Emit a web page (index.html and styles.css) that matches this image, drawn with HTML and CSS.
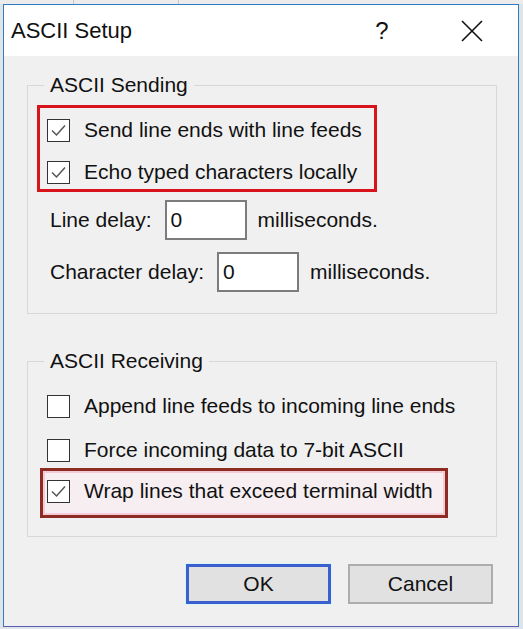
FILE: index.html
```html
<!DOCTYPE html>
<html lang="en">

<head>
    <meta charset="UTF-8">
    <meta name="viewport" content="width=device-width, initial-scale=1.0">
    <title>ASCII Setup</title>
    <link rel="stylesheet" href="styles.css">
</head>

<body>
    <div class="desktop">
        <div class="window">
            <!-- title bar -->
            <div class="titlebar">
                <span class="title">ASCII Setup</span>
                <span class="help">?</span>
                <span class="close">
                    <svg width="24" height="24" viewBox="0 0 24 24">
                        <path d="M2 2 L22 22 M22 2 L2 22" stroke="#111" stroke-width="1.6" fill="none"/>
                    </svg>
                </span>
            </div>

            <div class="content">
                <!-- sending -->
                <fieldset class="group group-send">
                    <legend>ASCII Sending</legend>
                    <div class="mark mark-red">
                        <div class="check">
                            <span class="box"><svg width="21" height="21" viewBox="0 0 21 21"><path d="M4 10.5 L8.5 15 L17 5.5" stroke="#555" stroke-width="1.5" fill="none"/></svg></span>
                            Send line ends with line feeds
                        </div>
                        <div class="check">
                            <span class="box"><svg width="21" height="21" viewBox="0 0 21 21"><path d="M4 10.5 L8.5 15 L17 5.5" stroke="#555" stroke-width="1.5" fill="none"/></svg></span>
                            Echo typed characters locally
                        </div>
                    </div>
                    <div class="delay-row first">
                        <span>Line delay:</span>
                        <span class="field">0</span>
                        <span>milliseconds.</span>
                    </div>
                    <div class="delay-row">
                        <span>Character delay:</span>
                        <span class="field">0</span>
                        <span>milliseconds.</span>
                    </div>
                </fieldset>

                <!-- receiving -->
                <fieldset class="group group-recv">
                    <legend>ASCII Receiving</legend>
                    <div class="check plain">
                        <span class="box"></span>
                        Append line feeds to incoming line ends
                    </div>
                    <div class="check plain second">
                        <span class="box"></span>
                        Force incoming data to 7-bit ASCII
                    </div>
                    <div class="mark mark-pink">
                        <div class="check">
                            <span class="box"><svg width="21" height="21" viewBox="0 0 21 21"><path d="M4 10.5 L8.5 15 L17 5.5" stroke="#555" stroke-width="1.5" fill="none"/></svg></span>
                            Wrap lines that exceed terminal width
                        </div>
                    </div>
                </fieldset>

                <div class="buttons">
                    <button class="btn btn-default">OK</button>
                    <button class="btn">Cancel</button>
                </div>
            </div>
        </div>
    </div>
</body>

</html>
```

FILE: styles.css
```css
body,
html {
    padding: 0;
    margin: 0;
}

body {
    height: 100vh;
    background: #dfe4e6;
    font-family: "Liberation Sans", Arial, sans-serif;
    color: #111;
    overflow: hidden;
}

.desktop {
    padding: 4px 0 0 3px;
    background:
        linear-gradient(to right, transparent 73px, #c9c9c9 73px, #c9c9c9 74px, transparent 74px, transparent 178px, #c9c9c9 178px, #c9c9c9 179px, transparent 179px) top left / 100% 4px no-repeat,
        linear-gradient(#ececec, #ececec) top left / 100% 4px no-repeat;
}

.window {
    width: 516px;
    box-sizing: border-box;
    border: 1px solid #2f7bc6;
    border-bottom-color: #5b5db7;
    background: #f0f0f0;
}

/* title bar ------------------------------- */
.titlebar {
    height: 51px;
    background: #fff;
    display: flex;
    align-items: center;
    padding-left: 7px;
}

.title {
    font-size: 22px;
    flex: 1;
}

.help {
    width: 30px;
    text-align: center;
    font-size: 24px;
    margin-right: 45px;
}

.close {
    width: 60px;
    margin-right: 16px;
    display: flex;
    justify-content: center;
}

/* content --------------------------------- */
.content {
    padding: 15px 21px 22px 23px;
    font-size: 21px;
}

.group {
    margin: 0;
    min-width: 0;
    border: 1px solid #d8d8d8;
    padding: 6px 0 21px 9px;
}

.group legend {
    margin-left: 7px;
    padding: 0 6px;
    line-height: 28px;
}

.group-recv {
    margin-top: 33px;
    padding-top: 19px;
    padding-bottom: 18px;
}

.check {
    display: flex;
    align-items: center;
    height: 24px;
    white-space: nowrap;
}

.box {
    width: 23px;
    height: 23px;
    box-sizing: border-box;
    border: 1px solid #333;
    background: #fff;
    margin-right: 14px;
    display: flex;
    align-items: center;
    justify-content: center;
}

.mark {
    width: fit-content;
    display: flex;
    flex-direction: column;
}

.mark-red {
    border: 3px solid #d8131b;
    padding: 10px 12px 5px 7px;
    gap: 18px;
}

.mark-pink {
    margin-left: 3px;
    margin-top: 6px;
    border: 3px solid #8e2c23;
    background: #f7eef1;
    box-shadow: inset 0 0 0 2px #f3cbd7;
    padding: 8px 12px 12px 4px;
}

.plain {
    margin-left: 10px;
}

.plain.second {
    margin-top: 20px;
}

.delay-row {
    display: flex;
    align-items: center;
    margin: 12px 0 0 13px;
}

.delay-row.first {
    margin-top: 8px;
}

.field {
    width: 82px;
    height: 40px;
    box-sizing: border-box;
    border: 2px solid #7c7c7c;
    background: #fff;
    padding-left: 4px;
    display: flex;
    align-items: center;
    margin: 0 11px 0 13px;
}

/* buttons --------------------------------- */
.buttons {
    display: flex;
    justify-content: flex-end;
    gap: 17px;
    margin: 27px 4px 0 0;
}

.btn {
    width: 145px;
    height: 40px;
    font-family: "Liberation Sans", Arial, sans-serif;
    font-size: 21px;
    color: #111;
    background: #e1e1e1;
    border: 2px solid #adadad;
    padding: 0;
}

.btn-default {
    border: 3px solid #3b5fcf;
    box-shadow: 0 0 0 1px #d6f5f3;
}
```
